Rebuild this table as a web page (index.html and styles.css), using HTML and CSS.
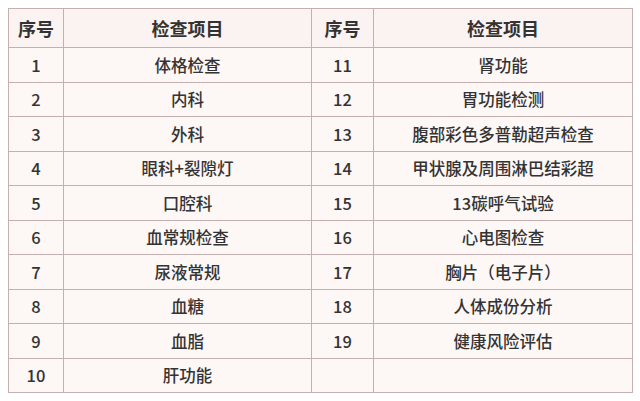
FILE: index.html
```html
<!DOCTYPE html>
<html lang="zh">
<head>
<meta charset="utf-8">
<link rel="stylesheet" href="styles.css">
</head>
<body>
<table class="exam">
  <colgroup>
    <col class="c-no"><col class="c-item"><col class="c-no2"><col class="c-item2">
  </colgroup>
  <thead>
    <tr><th>序号</th><th>检查项目</th><th>序号</th><th>检查项目</th></tr>
  </thead>
  <tbody>
    <tr><td>1</td><td>体格检查</td><td>11</td><td>肾功能</td></tr>
    <tr><td>2</td><td>内科</td><td>12</td><td>胃功能检测</td></tr>
    <tr><td>3</td><td>外科</td><td>13</td><td>腹部彩色多普勒超声检查</td></tr>
    <tr><td>4</td><td>眼科+裂隙灯</td><td>14</td><td>甲状腺及周围淋巴结彩超</td></tr>
    <tr><td>5</td><td>口腔科</td><td>15</td><td>13碳呼气试验</td></tr>
    <tr><td>6</td><td>血常规检查</td><td>16</td><td>心电图检查</td></tr>
    <tr><td>7</td><td>尿液常规</td><td>17</td><td>胸片（电子片）</td></tr>
    <tr><td>8</td><td>血糖</td><td>18</td><td>人体成份分析</td></tr>
    <tr><td>9</td><td>血脂</td><td>19</td><td>健康风险评估</td></tr>
    <tr><td>10</td><td>肝功能</td><td></td><td></td></tr>
  </tbody>
</table>
</body>
</html>
```
FILE: styles.css
```css
html, body {
  margin: 0;
  padding: 0;
  background: #ffffff;
}
body {
  padding: 8px 0 0 8px;
  font-family: "Noto Sans CJK SC", "Noto Sans", sans-serif;
  color: #333333;
}
.exam {
  border-collapse: collapse;
  table-layout: fixed;
  width: 624px;
  background: #fdf7f6;
  border: 1.5px solid #bba9aa;
}
.c-no { width: 55px; }
.c-item { width: 248px; }
.c-no2 { width: 62px; }
.c-item2 { width: 259px; }
.exam th, .exam td {
  border: 1px solid #c4b0b1;
  text-align: center;
  padding: 0;
  white-space: nowrap;
}
.exam th {
  height: 38px;
  font-size: 18px;
  font-weight: 700;
  background: #fbf3f2;
}
.exam td {
  height: 33.5px;
  font-size: 16.5px;
  font-weight: 500;
}
```
